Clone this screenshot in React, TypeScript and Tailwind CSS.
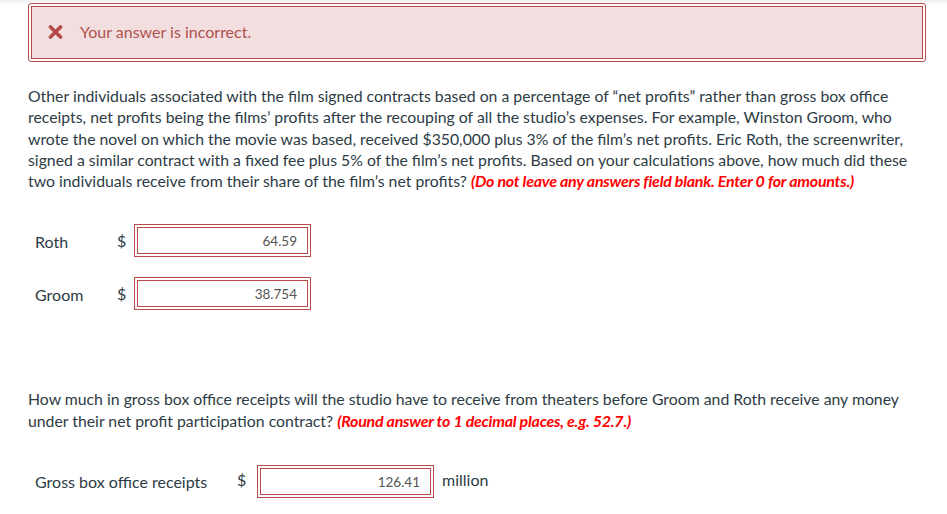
import React from "react";

function XIcon() {
  return (
    <svg width="15" height="14" viewBox="0 0 15 14" className="shrink-0">
      <path d="M2.5 2 L12.5 12 M12.5 2 L2.5 12" stroke="#b34848" strokeWidth="3.6" strokeLinecap="round" />
    </svg>
  );
}

function Box({ value, w }: { value: string; w: string }) {
  return (
    <div className={`${w} h-[33px] border border-[#b94a48] p-[2px] bg-white`}>
      <div className="h-full w-full border border-[#b94a48] flex items-center justify-end pr-[10px] text-[13.5px] text-[#555]">
        {value}
      </div>
    </div>
  );
}

export default function App() {
  return (
    <div className="w-[947px] h-[514px] bg-gradient-to-b from-[#efefef] via-white to-white bg-no-repeat [background-size:100%_10px] text-[#2d3b45] overflow-hidden" style={{ fontFamily: "Lato, 'Open Sans', sans-serif" }}>
      <div className="pt-[3px] pl-[28px]">
        <div className="w-[898px] h-[59px] border border-[#b94a48] rounded-[3px] p-[2px]">
          <div className="h-full w-full border border-[#b94a48] bg-[#f2dede] flex items-center pl-[16px] pb-[1px]">
            <XIcon />
            <span className="ml-[17px] text-[16px] text-[#b0514f]">Your answer is incorrect.</span>
          </div>
        </div>
      </div>

      <div className="pl-[28px] pt-[23px] text-[15.8px] leading-[21.3px]">
        <div>Other individuals associated with the film signed contracts based on a percentage of “net profits” rather than gross box office</div>
        <div>receipts, net profits being the films’ profits after the recouping of all the studio’s expenses. For example, Winston Groom, who</div>
        <div>wrote the novel on which the movie was based, received $350,000 plus 3% of the film’s net profits. Eric Roth, the screenwriter,</div>
        <div>signed a similar contract with a fixed fee plus 5% of the film’s net profits. Based on your calculations above, how much did these</div>
        <div>
          two individuals receive from their share of the film’s net profits?{" "}
          <span className="text-[#ff0000] text-[16px] font-bold italic tracking-[-0.25px]">(Do not leave any answers field blank. Enter 0 for amounts.)</span>
        </div>
      </div>

      <div className="pl-[35px] pt-[33px] text-[16px]">
        <div className="flex items-center h-[33px]">
          <span className="w-[82px] mt-[2px]">Roth</span>
          <span className="w-[17px]">$</span>
          <Box value="64.59" w="w-[177px]" />
        </div>
        <div className="flex items-center h-[33px] mt-[20px]">
          <span className="w-[82px] mt-[2px]">Groom</span>
          <span className="w-[17px]">$</span>
          <Box value="38.754" w="w-[177px]" />
        </div>
      </div>

      <div className="pl-[28px] pt-[78px] text-[15.8px] leading-[22px]">
        <div>How much in gross box office receipts will the studio have to receive from theaters before Groom and Roth receive any money</div>
        <div>
          under their net profit participation contract?{" "}
          <span className="text-[#ff0000] text-[16px] font-bold italic tracking-[-0.25px]">(Round answer to 1 decimal places, e.g. 52.7.)</span>
        </div>
      </div>

      <div className="pl-[35px] pt-[33px] text-[16px]">
        <div className="flex items-center h-[33px]">
          <span className="w-[202px]">Gross box office receipts</span>
          <span className="w-[20px] -mt-[3px]">$</span>
          <Box value="126.41" w="w-[177px]" />
          <span className="ml-[8px] -mt-[3px]">million</span>
        </div>
      </div>
    </div>
  );
}
